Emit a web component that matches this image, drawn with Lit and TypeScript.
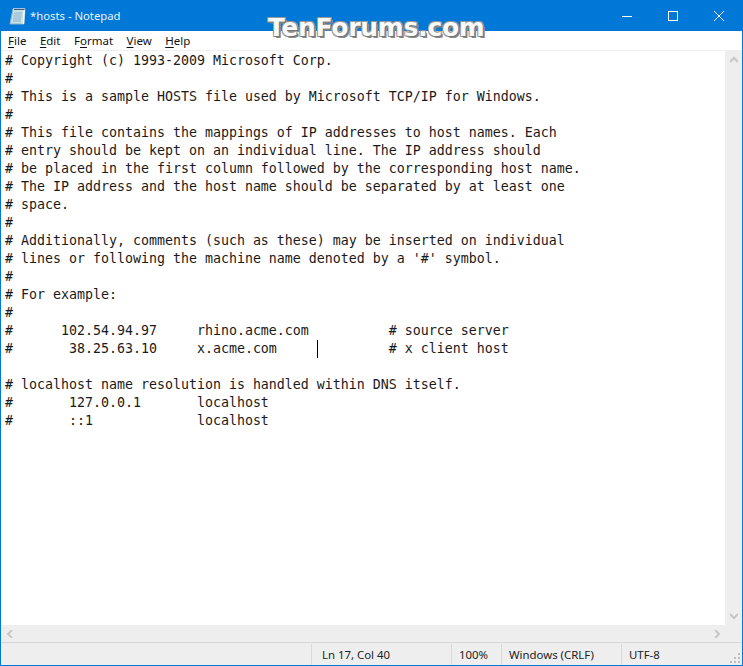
import { LitElement, html, css } from "lit";
import { customElement } from "lit/decorators.js";

const TEXT = `# Copyright (c) 1993-2009 Microsoft Corp.
#
# This is a sample HOSTS file used by Microsoft TCP/IP for Windows.
#
# This file contains the mappings of IP addresses to host names. Each
# entry should be kept on an individual line. The IP address should
# be placed in the first column followed by the corresponding host name.
# The IP address and the host name should be separated by at least one
# space.
#
# Additionally, comments (such as these) may be inserted on individual
# lines or following the machine name denoted by a '#' symbol.
#
# For example:
#
#      102.54.94.97     rhino.acme.com          # source server
#       38.25.63.10     x.acme.com              # x client host

# localhost name resolution is handled within DNS itself.
#       127.0.0.1       localhost
#       ::1             localhost`;

@customElement("app-root")
export class AppRoot extends LitElement {
  static styles = css`
    :host {
      display: flex;
      flex-direction: column;
      width: 743px;
      height: 666px;
      box-sizing: border-box;
      position: relative;
      background: #fff;
      border: 1px solid #0078d7;
      border-top: 0;
      overflow: hidden;
    }
    .title {
      height: 31px;
      flex: none;
      background: #0078d7;
      color: #fff;
      display: flex;
      align-items: center;
      font: 11.3px "Noto Sans", sans-serif;
    }
    .app-icon { margin: 0 4px 0 8px; flex: none; }
    .title-text { flex: 1; color: #e8f2fb; }
    .ctrl { width: 46px; height: 31px; display: flex; align-items: center; justify-content: center; }
    .ctrl svg { display: block; }
    .menu {
      height: 19px;
      flex: none;
      display: flex;
      align-items: center;
      gap: 13.5px;
      padding-left: 7px;
      font: 11.5px "Noto Sans", sans-serif;
      color: #111;
      border-bottom: 1px solid #f0f0f0;
    }
    .menu u { text-decoration-thickness: 1px; text-underline-offset: 2px; }
    .body { flex: 1; display: flex; min-height: 0; }
    .text {
      flex: 1;
      position: relative;
      margin: 0;
      padding: 1px 0 0 4px;
      font: 13.29px/18px "DejaVu Sans Mono", monospace;
      color: #1a1a1a;
      white-space: pre;
      overflow: hidden;
    }
    .caret {
      position: absolute;
      left: 316px;
      top: 289px;
      width: 1px;
      height: 18px;
      background: #000;
    }
    .vbar {
      width: 17px;
      flex: none;
      background: #eeeeee;
      display: flex;
      flex-direction: column;
      justify-content: space-between;
      align-items: center;
      padding: 5px 0;
      box-sizing: border-box;
    }
    .hbar {
      height: 17px;
      flex: none;
      background: #eeeeee;
      display: flex;
      justify-content: space-between;
      align-items: center;
      padding: 0 21px 0 5px;
    }
    .status {
      height: 23px;
      flex: none;
      background: #eeeeee;
      border-top: 1px solid #d7d7d7;
      display: flex;
      font: 11.4px "Noto Sans", sans-serif;
      color: #222;
      position: relative;
      box-sizing: border-box;
    }
    .cell {
      border-left: 1px solid #d9d9d9;
      margin: 1px 0 0;
      padding: 2px 0 0 7px;
      box-sizing: border-box;
      line-height: 17px;
    }
    .spacer { width: 310px; border: 0; }
    .pos { width: 140px; padding-left: 10px; }
    .zoom { width: 50px; }
    .eol { width: 120px; }
    .enc { width: 110px; }
    .grip { position: absolute; right: 1px; bottom: 1px; }
    .mark {
      position: absolute;
      left: 267px;
      top: 16px;
      font: bold 24.6px/24px "DejaVu Sans", sans-serif;
      color: #fafafa;
      text-shadow: 1px 1px 0 #777, -1px -1px 0 #999, 1px -1px 0 #999, -1px 1px 0 #999, 2px 2px 0 #888;
      white-space: nowrap;
    }
  `;

  render() {
    const chev = (d: string) => html`<svg width="8" height="8" viewBox="0 0 8 8"><path d=${d} fill="none" stroke="#c6c6c6" stroke-width="2"/></svg>`;
    return html`
      <div class="title">
        <svg class="app-icon" width="17" height="18" viewBox="0 0 17 18">
          <path d="M4 2h12l-1 15H1z" fill="#c6e0ea" stroke="#8fb6ca"/>
          <path d="M14.500 3h1.500l-1 14h-1.500z" fill="#f4f8fa"/>
          <path d="M5 1v2M7 1v2M9 1v2M11 1v2M13 1v2M15 1v2" stroke="#f0f4f6"/>
          <path d="M5 2.500h10.500" stroke="#4a5a66"/>
          <path d="M5 6h8M4.500 8h8M4.500 10h8M4 12h8M4 14h8" stroke="#8db4c8"/>
        </svg>
        <span class="title-text">*hosts - Notepad</span>
        <span class="ctrl"><svg width="10" height="10"><path d="M0 5.500h10" stroke="#fff"/></svg></span>
        <span class="ctrl"><svg width="10" height="10"><rect x=".5" y=".5" width="9" height="9" fill="none" stroke="#fff"/></svg></span>
        <span class="ctrl"><svg width="10" height="10"><path d="M0 0l10 10M10 0L0 10" stroke="#fff"/></svg></span>
      </div>
      <div class="menu">
        <span><u>F</u>ile</span><span><u>E</u>dit</span><span>F<u>o</u>rmat</span><span><u>V</u>iew</span><span><u>H</u>elp</span>
      </div>
      <div class="body">
        <pre class="text">${TEXT}<span class="caret"></span></pre>
        <div class="vbar">${chev("M0 6l4-4 4 4")}${chev("M0 2l4 4 4-4")}</div>
      </div>
      <div class="hbar">${chev("M6 0L2 4l4 4")}${chev("M2 0l4 4-4 4")}</div>
      <div class="status">
        <span class="cell spacer"></span>
        <span class="cell pos">Ln 17, Col 40</span>
        <span class="cell zoom">100%</span>
        <span class="cell eol">Windows (CRLF)</span>
        <span class="cell enc">UTF-8</span>
        <svg class="grip" width="12" height="12" fill="#bbb">
          <rect x="9" y="1" width="2" height="2"/><rect x="5" y="5" width="2" height="2"/><rect x="9" y="5" width="2" height="2"/>
          <rect x="1" y="9" width="2" height="2"/><rect x="5" y="9" width="2" height="2"/><rect x="9" y="9" width="2" height="2"/>
        </svg>
      </div>
      <div class="mark">TenForums.com</div>
    `;
  }
}
